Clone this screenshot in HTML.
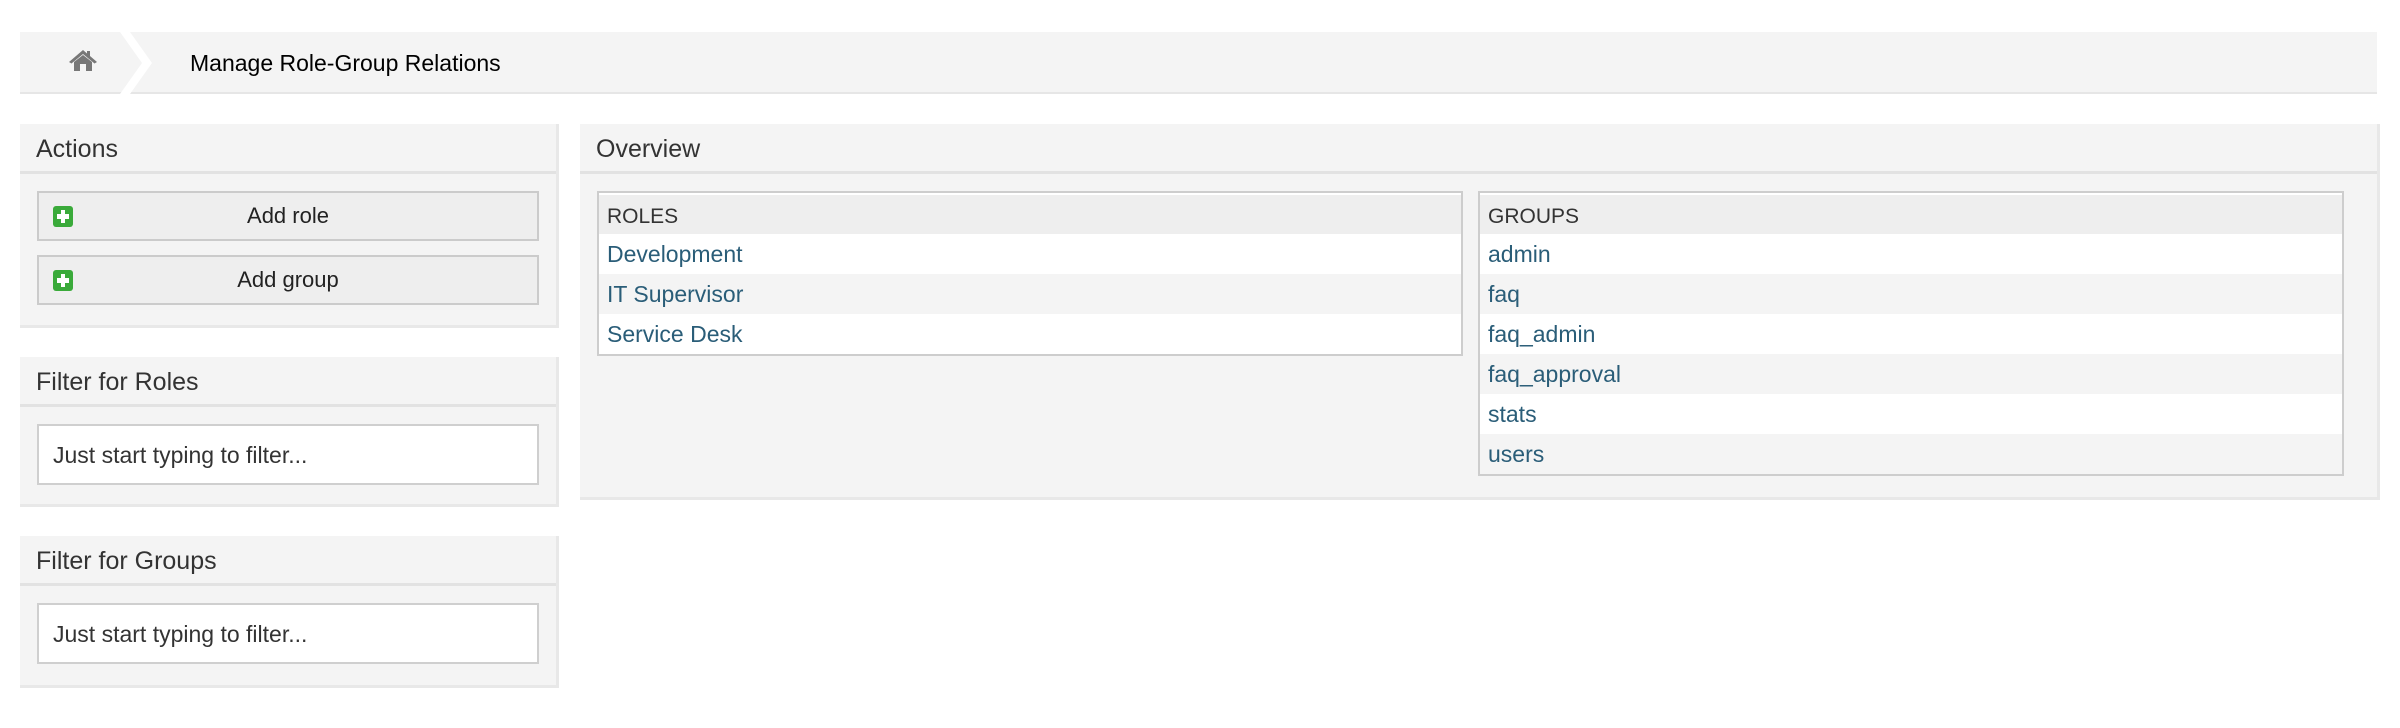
<!DOCTYPE html>
<html><head><style>
*{box-sizing:border-box;margin:0;padding:0}
body{width:2400px;height:728px;background:#fff;font-family:"Liberation Sans",Arial,sans-serif;position:relative;overflow:hidden;color:#000}
.abs{position:absolute}
.bc{left:20px;top:32px;width:2357px;height:62px;background:#f4f4f4;border-bottom:2px solid #e6e6e6}
.box{background:#f4f4f4;border-bottom:3px solid #e8e8e8;border-right:3px solid #e8e8e8}
.hd{position:absolute;left:0;right:0;top:0;height:50px;border-bottom:3px solid #e2e2e2;font-size:25px;color:#333;padding:11px 0 0 16px}
.btn{position:absolute;left:17px;right:17px;height:50px;background:#eeeeee;border:2px solid #cbcbcb;font-size:22px;color:#222;text-align:center;line-height:46px}
.plus{position:absolute;left:14px;top:13px;width:20px;height:21px;background:#3aaa3a;border-radius:3px}
.plus:before{content:"";position:absolute;left:8px;top:4px;width:4px;height:13px;background:#fff}
.plus:after{content:"";position:absolute;left:4px;top:8px;width:12px;height:5px;background:#fff}
.inp{position:absolute;left:17px;right:17px;height:61px;background:#fff;border:2px solid #cfcfcf;font-size:23px;color:#333;padding:16px 0 0 14px}
.tbl{position:absolute;border:2px solid #cdcdcd;background:#fff}
.tbl div{height:40px;font-size:23px;color:#2a5d78;padding:7px 0 0 8px}
.tbl .th{height:41px;background:#eeeeee;color:#333;font-size:21px;padding:10px 0 0 8px;border-top:2px solid #fff}
.tbl .alt{background:#f4f4f4}
</style></head><body>
<div class="abs bc">
  <svg class="abs" style="left:48px;top:16px" width="30" height="24" viewBox="0 0 30 24"><path d="M15 2 L1 14 L3.5 15.5 L15 6 L26.5 15.5 L29 14 L22 8 V3 H19 V5.5 Z" fill="#777"/><path d="M6 14 L15 7 L24 14 V23 H18 V16 H12 V23 H6 Z" fill="#777"/></svg>
  <svg class="abs" style="left:100px;top:0" width="60" height="62" viewBox="0 0 60 62"><path d="M0 0 H10 L32 31 L10 62 H0 L22 31 Z" fill="#fff"/></svg>
  <div class="abs" style="left:170px;top:18px;font-size:23px;color:#000">Manage Role-Group Relations</div>
</div>

<div class="abs box" style="left:20px;top:124px;width:539px;height:204px">
  <div class="hd">Actions</div>
  <div class="btn" style="top:67px"><span class="plus"></span>Add role</div>
  <div class="btn" style="top:131px"><span class="plus"></span>Add group</div>
</div>

<div class="abs box" style="left:20px;top:357px;width:539px;height:150px">
  <div class="hd">Filter for Roles</div>
  <div class="inp" style="top:67px">Just start typing to filter...</div>
</div>

<div class="abs box" style="left:20px;top:536px;width:539px;height:152px">
  <div class="hd">Filter for Groups</div>
  <div class="inp" style="top:67px">Just start typing to filter...</div>
</div>

<div class="abs box" style="left:580px;top:124px;width:1800px;height:376px">
  <div class="hd">Overview</div>
  <div class="tbl" style="left:17px;top:67px;width:866px">
    <div class="th">ROLES</div>
    <div>Development</div>
    <div class="alt">IT Supervisor</div>
    <div>Service Desk</div>
  </div>
  <div class="tbl" style="left:898px;top:67px;width:866px">
    <div class="th">GROUPS</div>
    <div>admin</div>
    <div class="alt">faq</div>
    <div>faq_admin</div>
    <div class="alt">faq_approval</div>
    <div>stats</div>
    <div class="alt">users</div>
  </div>
</div>
</body></html>
